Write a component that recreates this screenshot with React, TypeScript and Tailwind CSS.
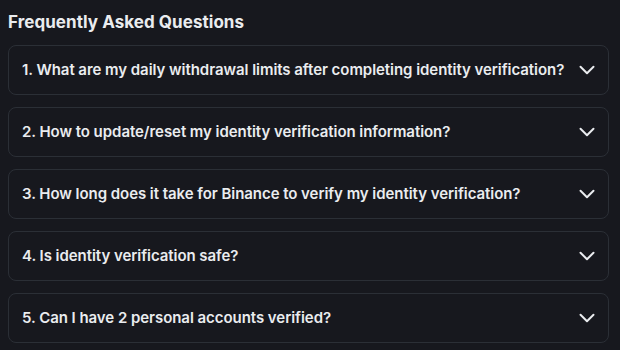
const faqs = [
  "1. What are my daily withdrawal limits after completing identity verification?",
  "2. How to update/reset my identity verification information?",
  "3. How long does it take for Binance to verify my identity verification?",
  "4. Is identity verification safe?",
  "5. Can I have 2 personal accounts verified?",
];

const Chevron = () => (
  <svg width="16" height="10" viewBox="0 0 16 10" fill="none" className="shrink-0">
    <path d="M1.5 1.8 8 8.2l6.5-6.4" stroke="#eaecef" strokeWidth="2" strokeLinecap="round" strokeLinejoin="round" />
  </svg>
);

export default function App() {
  return (
    <div className="w-[620px] h-[350px] bg-[#17181e] px-2 pt-[11px] font-['Inter',sans-serif] text-[#eaecef] overflow-hidden">
      <h2 className="text-[17px] font-bold leading-[22px] mb-3 tracking-[0.05px]">Frequently Asked Questions</h2>
      <div className="flex flex-col gap-3">
        {faqs.map((q) => (
          <div
            key={q}
            className="h-[50px] w-[601px] rounded-lg border border-[#2b2f36] flex items-center justify-between pl-[13px] pr-[13px]"
          >
            <span className="text-[15px] font-semibold tracking-[-0.05px]">{q}</span>
            <Chevron />
          </div>
        ))}
      </div>
    </div>
  );
}
